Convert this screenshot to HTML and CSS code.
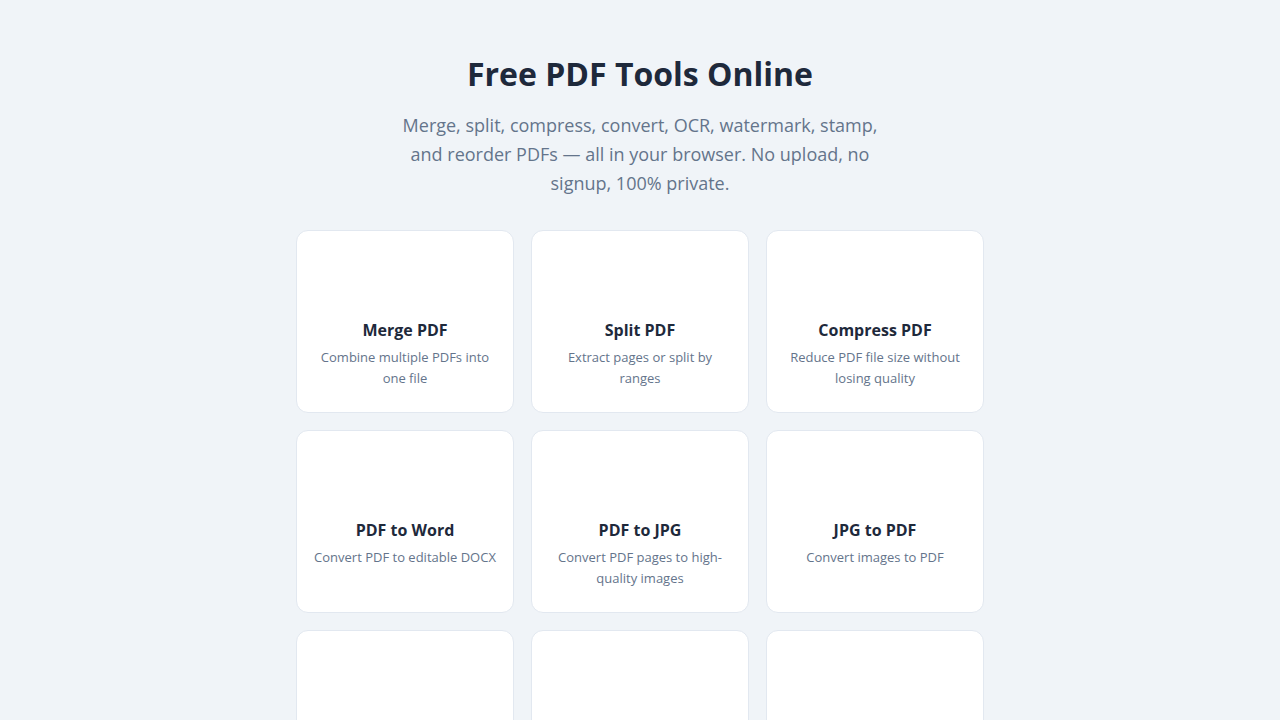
FILE: index.html
```html
<!DOCTYPE html>
<html lang="en">
<head>
    <meta charset="UTF-8">
    <meta name="viewport" content="width=device-width, initial-scale=1.0">
    <title>Free PDF Tools Online</title>
    <link rel="stylesheet" href="styles.css">
</head>
<body>
    <!-- hero -->
    <header class="hero">
        <h1>Free PDF Tools Online</h1>
        <p class="lead">Merge, split, compress, convert, OCR, watermark, stamp, and reorder PDFs — all in your browser. No upload, no signup, 100% private.</p>
    </header>

    <!-- tool grid -->
    <main class="tools">
        <a class="tool-card" href="#merge">
            <div class="tool-icon"></div>
            <h2>Merge PDF</h2>
            <p>Combine multiple PDFs into one file</p>
        </a>
        <a class="tool-card" href="#split">
            <div class="tool-icon"></div>
            <h2>Split PDF</h2>
            <p>Extract pages or split by ranges</p>
        </a>
        <a class="tool-card" href="#compress">
            <div class="tool-icon"></div>
            <h2>Compress PDF</h2>
            <p>Reduce PDF file size without losing quality</p>
        </a>
        <a class="tool-card" href="#pdf-to-word">
            <div class="tool-icon"></div>
            <h2>PDF to Word</h2>
            <p>Convert PDF to editable DOCX</p>
        </a>
        <a class="tool-card" href="#pdf-to-jpg">
            <div class="tool-icon"></div>
            <h2>PDF to JPG</h2>
            <p>Convert PDF pages to high-quality images</p>
        </a>
        <a class="tool-card" href="#jpg-to-pdf">
            <div class="tool-icon"></div>
            <h2>JPG to PDF</h2>
            <p>Convert images to PDF</p>
        </a>
        <a class="tool-card" href="#ocr">
            <div class="tool-icon"></div>
            <h2>OCR PDF</h2>
            <p>Make scanned PDFs searchable</p>
        </a>
        <a class="tool-card" href="#watermark">
            <div class="tool-icon"></div>
            <h2>Watermark PDF</h2>
            <p>Add text watermarks to pages</p>
        </a>
        <a class="tool-card" href="#reorder">
            <div class="tool-icon"></div>
            <h2>Reorder Pages</h2>
            <p>Drag and drop to rearrange pages</p>
        </a>
    </main>
</body>
</html>
```

FILE: styles.css
```css
*{
    box-sizing: border-box;
}
body{
    margin: 0;
    background-color: #f0f4f8;
    font-family: "Open Sans", "Noto Sans", sans-serif;
    color: #1e293b;
}
.hero{
    text-align: center;
    padding: 55px 1rem 0;
}
.hero h1{
    margin: 0;
    font-size: 32px;
    line-height: 38px;
    font-weight: 700;
}
.lead{
    max-width: 490px;
    margin: 18px auto 0;
    font-size: 18px;
    line-height: 29px;
    color: #64748b;
}
.tools{
    display: grid;
    grid-template-columns: repeat(3, 1fr);
    gap: 17px;
    width: 688px;
    margin: 32px auto 0;
    padding-bottom: 3rem;
}
.tool-card{
    display: block;
    background-color: #fff;
    border: 1px solid #e2e8f0;
    border-radius: 12px;
    padding: 29px 16px 23px;
    text-align: center;
    text-decoration: none;
    color: inherit;
}
.tool-icon{
    height: 48px;
    margin-bottom: 12px;
}
.tool-card h2{
    margin: 0;
    font-size: 16px;
    line-height: 21px;
    font-weight: 700;
}
.tool-card p{
    margin: 6px 0 0;
    font-size: 13px;
    line-height: 21px;
    color: #64748b;
}
```
